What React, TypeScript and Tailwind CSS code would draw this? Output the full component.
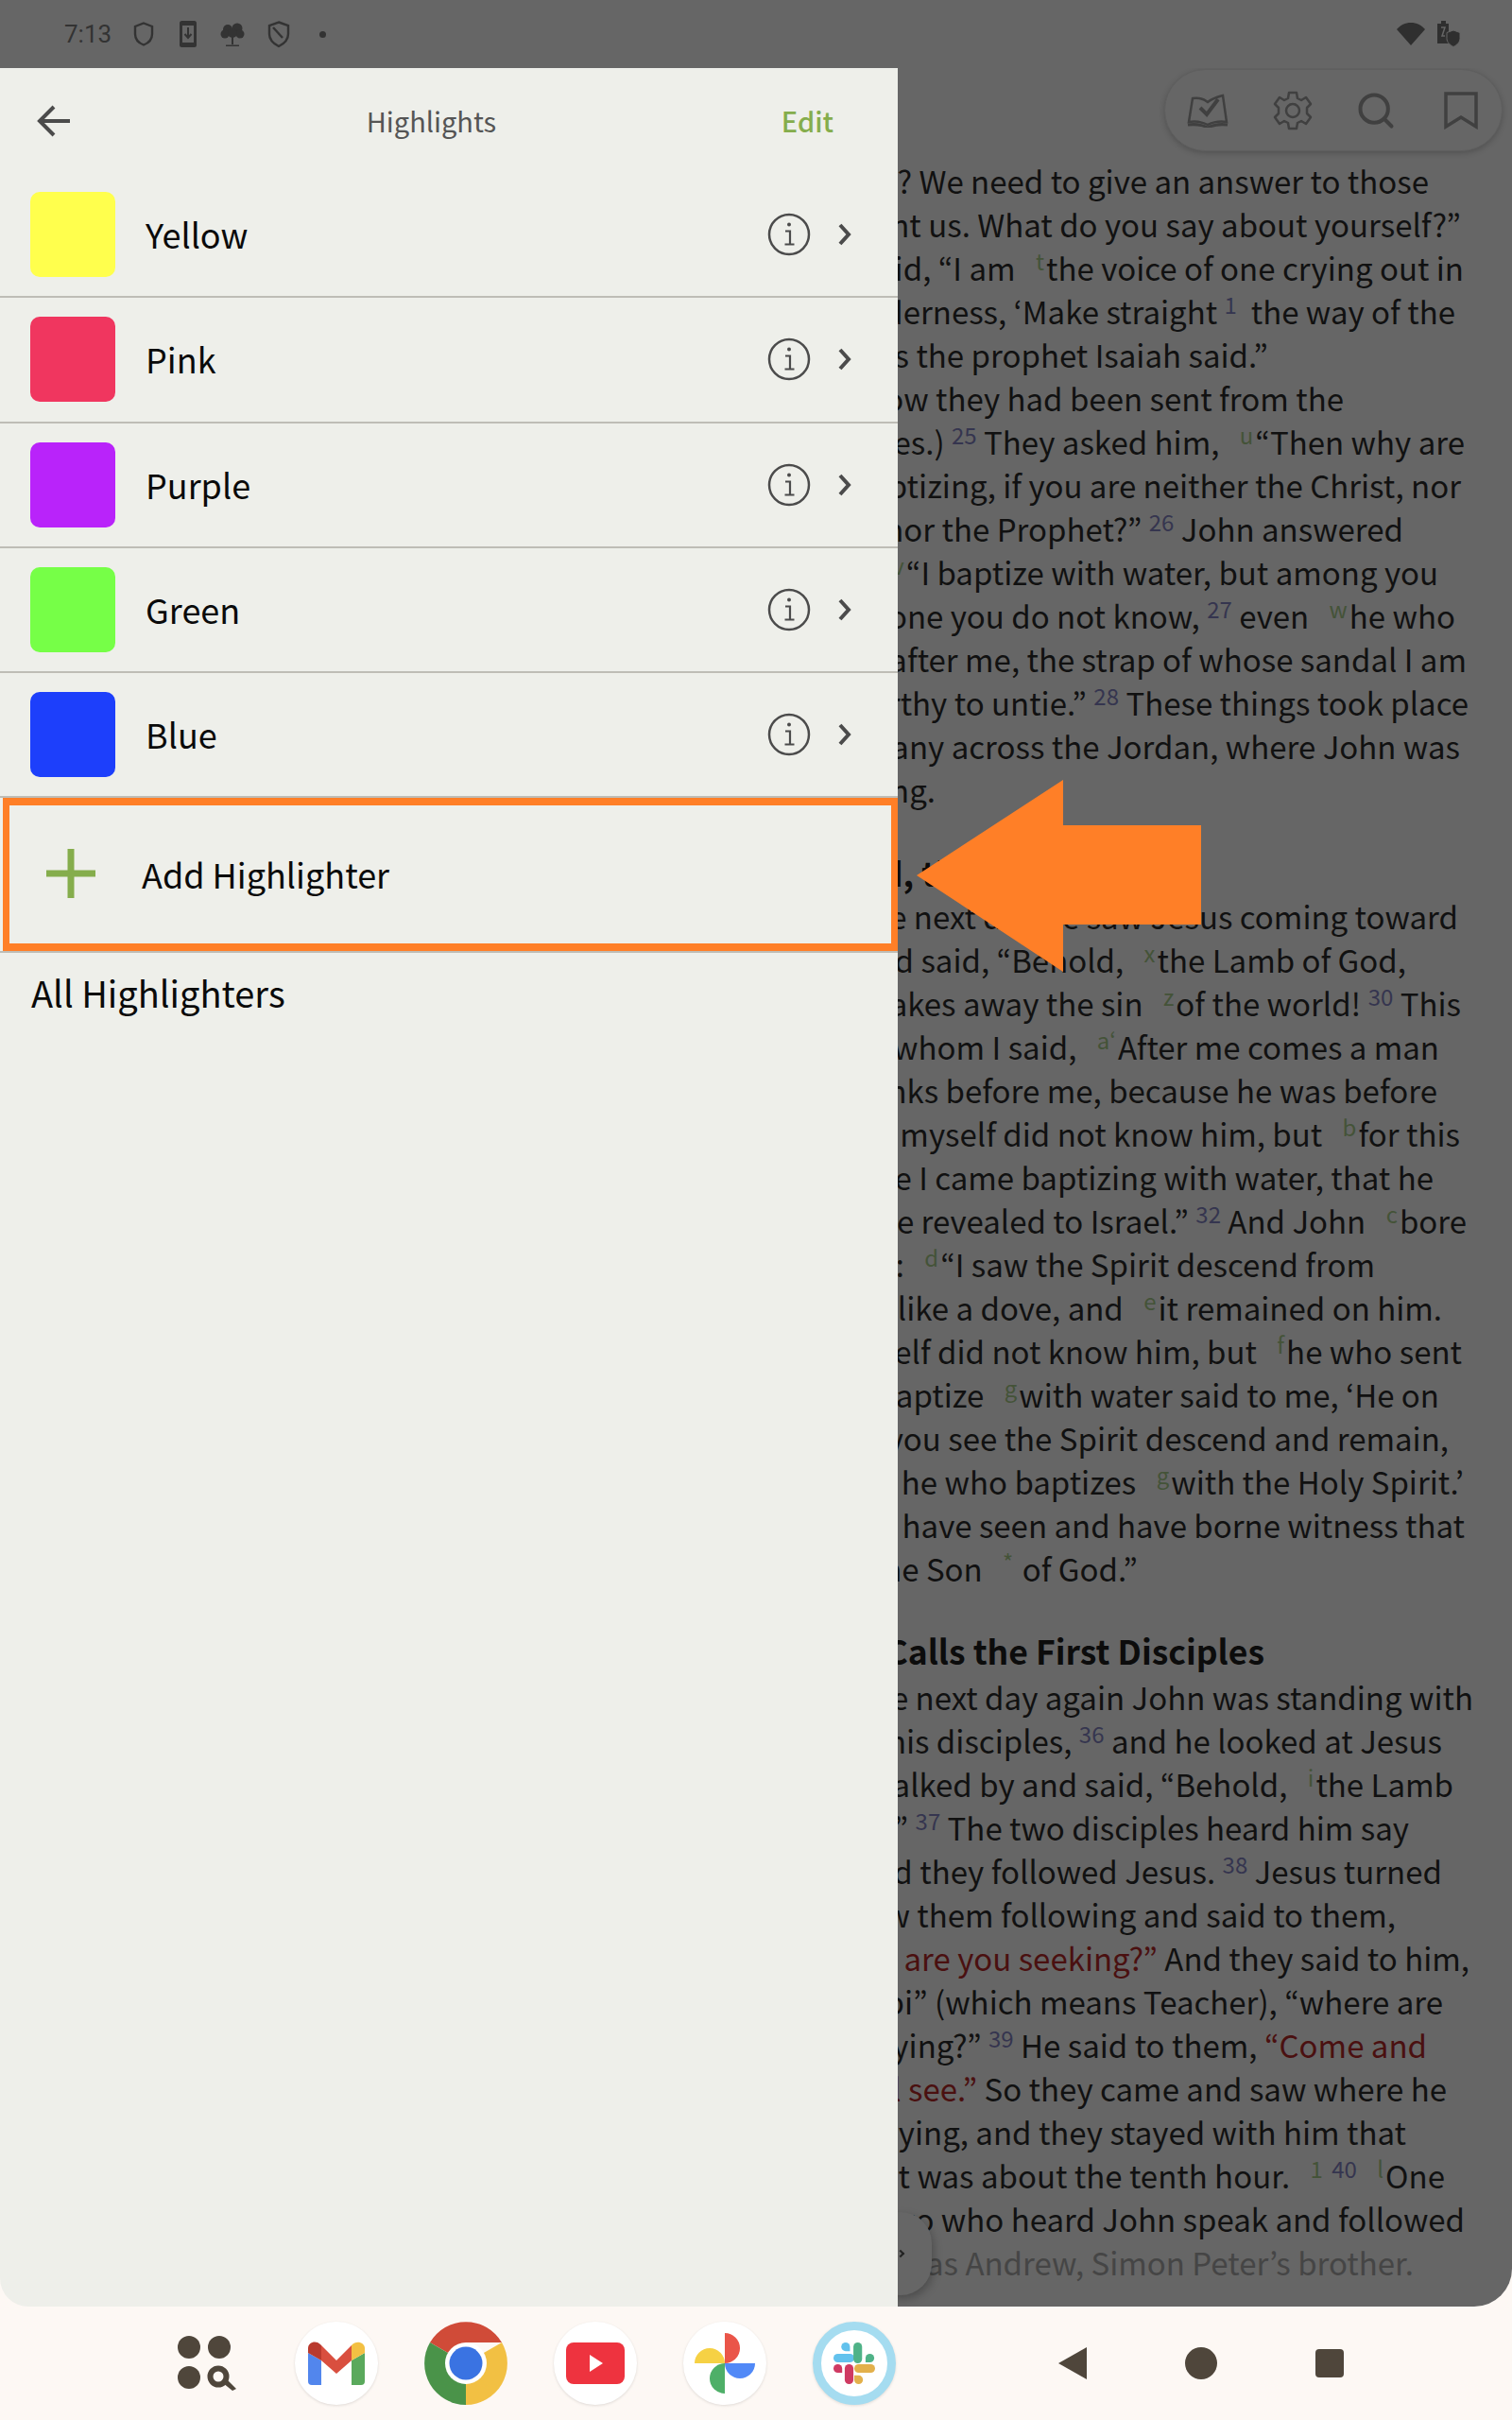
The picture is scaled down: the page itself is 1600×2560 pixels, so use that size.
import { Search } from "lucide-react";

type Seg = string | { v: string } | { f: string } | { r: string };

interface Line {
  end: number; // x where the line's last glyph stops
  segs: Seg[];
  grey?: boolean;
}

const colors = [
  { name: "Yellow", hex: "bg-[#ffff4d]" },
  { name: "Pink", hex: "bg-[#f0365f]" },
  { name: "Purple", hex: "bg-[#b923fa]" },
  { name: "Green", hex: "bg-[#76ff47]" },
  { name: "Blue", hex: "bg-[#1d3ffb]" },
];

const firstLines: Line[] = [
  { end: 1512, segs: ["? We need to give an answer to those"] },
  { end: 1546, segs: ["sent us. What do you say about yourself?”"] },
  { end: 1549, segs: ["He said, “I am ", { f: "t" }, "the voice of one crying out in"] },
  { end: 1540, segs: ["the wilderness, ‘Make straight ", { v: "1" }, "  the way of the"] },
  { end: 1342, segs: ["Lord,’ as the prophet Isaiah said.”"] },
  { end: 1422, segs: ["(Now they had been sent from the"] },
  { end: 1550, segs: ["Pharisees.) ", { v: "25" }, " They asked him, ", { f: "u" }, "“Then why are"] },
  { end: 1546, segs: ["you baptizing, if you are neither the Christ, nor"] },
  { end: 1485, segs: ["Elijah, nor the Prophet?” ", { v: "26" }, " John answered"] },
  { end: 1522, segs: ["them, ", { f: "v" }, "“I baptize with water, but among you"] },
  { end: 1540, segs: ["stands one you do not know, ", { v: "27" }, " even ", { f: "w" }, "he who"] },
  { end: 1552, segs: ["comes after me, the strap of whose sandal I am"] },
  { end: 1554, segs: ["not worthy to untie.” ", { v: "28" }, " These things took place"] },
  { end: 1545, segs: ["in Bethany across the Jordan, where John was"] },
  { end: 990, segs: ["baptizing."] },
];

const secondLines: Line[] = [
  { end: 1543, segs: ["The next day he saw Jesus coming toward"] },
  { end: 1488, segs: ["him, and said, “Behold, ", { f: "x" }, "the Lamb of God,"] },
  { end: 1546, segs: ["who takes away the sin ", { f: "z" }, "of the world! ", { v: "30" }, " This"] },
  { end: 1523, segs: ["is he of whom I said, ", { f: "a‘" }, "After me comes a man"] },
  { end: 1521, segs: ["who ranks before me, because he was before"] },
  { end: 1545, segs: ["myself did not know him, but ", { f: "b" }, "for this"] },
  { end: 1517, segs: ["purpose I came baptizing with water, that he"] },
  { end: 1552, segs: ["might be revealed to Israel.” ", { v: "32" }, " And John ", { f: "c" }, "bore"] },
  { end: 1455, segs: ["witness: ", { f: "d" }, "“I saw the Spirit descend from"] },
  { end: 1526, segs: ["like a dove, and ", { f: "e" }, "it remained on him."] },
  { end: 1547, segs: ["I myself did not know him, but ", { f: "f" }, "he who sent"] },
  { end: 1523, segs: ["me to baptize ", { f: "g" }, "with water said to me, ‘He on"] },
  { end: 1533, segs: ["whom you see the Spirit descend and remain,"] },
  { end: 1549, segs: ["this is he who baptizes ", { f: "g" }, "with the Holy Spirit.’"] },
  { end: 1550, segs: ["have seen and have borne witness that"] },
  { end: 1204, segs: ["this is the Son ", { f: "*" }, " of God.”"] },
];

const thirdLines: Line[] = [
  { end: 1559, segs: ["The next day again John was standing with"] },
  { end: 1526, segs: ["two of his disciples, ", { v: "36" }, " and he looked at Jesus"] },
  { end: 1538, segs: ["as he walked by and said, “Behold, ", { f: "i" }, "the Lamb"] },
  { end: 1491, segs: ["of God!” ", { v: "37" }, " The two disciples heard him say"] },
  { end: 1526, segs: ["this, and they followed Jesus. ", { v: "38" }, " Jesus turned"] },
  { end: 1477, segs: ["and saw them following and said to them,"] },
  { end: 1555, segs: [{ r: "“What are you seeking?”" }, " And they said to him,"] },
  { end: 1527, segs: ["“Rabbi” (which means Teacher), “where are"] },
  { end: 1510, segs: ["you staying?” ", { v: "39" }, " He said to them, ", { r: "“Come and" }] },
  { end: 1531, segs: [{ r: "you will see.”" }, " So they came and saw where he"] },
  { end: 1488, segs: ["was staying, and they stayed with him that"] },
  { end: 1529, segs: ["day, for it was about the tenth hour. ", { f: "1" }, " ", { v: "40" }, " ", { f: "l" }, "One"] },
  { end: 1550, segs: ["of the two who heard John speak and followed"] },
  { end: 1496, segs: ["him was Andrew, Simon Peter’s brother."], grey: true },
];

function ReadingLine({ line }: { line: Line }) {
  return (
    <div
      className={`flex h-[46px] justify-end whitespace-pre text-[33px] leading-[46px] ${line.grey ? "text-[#454545]" : "text-[#111111]"}`}
      style={{ marginRight: 1600 - line.end }}
    >
      <span className="shrink-0">
        {line.segs.map((s, i) => {
          if (typeof s === "string") return <span key={i}>{s}</span>;
          if ("v" in s)
            return (
              <span key={i} className="relative -top-[11px] text-[24px] leading-none text-[#35354f]">
                {s.v}
              </span>
            );
          if ("f" in s)
            return (
              <span key={i} className="relative -top-[11px] ml-[14px] mr-[2px] text-[24px] leading-none text-[#445338]">
                {s.f}
              </span>
            );
          return (
            <span key={i} className="text-[#4a1010]">
              {s.r}
            </span>
          );
        })}
      </span>
    </div>
  );
}

function Heading({ text, end, className }: { text: string; end: number; className: string }) {
  return (
    <div
      className={`flex justify-end whitespace-pre text-[35.500px] font-bold leading-[46px] text-[#0c0c0c] ${className}`}
      style={{ marginRight: 1600 - end }}
    >
      <span className="shrink-0">{text}</span>
    </div>
  );
}

function StatusBar() {
  return (
    <div className="flex h-[72px] shrink-0 items-center justify-between bg-[#666666] pl-[68px] pr-[54px] text-[#2f2f2f]">
      <div className="flex items-center">
        <span className="text-[26px] font-[Roboto,sans-serif] leading-none text-[#333333]">7:13</span>
        <svg className="ml-[22px]" width="24" height="28" viewBox="0 0 24 28" fill="none" stroke="#333" strokeWidth="2.4">
          <path d="M12 2.5 21 6v8c0 5.5-3.7 9.5-9 11.5C6.700 23.500 3 19.500 3 14V6z" />
        </svg>
        <svg className="ml-[25px]" width="20" height="30" viewBox="0 0 20 30">
          <rect x="1" y="1" width="18" height="28" rx="2.500" fill="#333" />
          <rect x="4" y="6" width="12" height="18" fill="#666" />
          <path d="M10 8v10M6.500 15l3.500 4 3.500-4" stroke="#333" strokeWidth="2" fill="none" />
        </svg>
        <svg className="ml-[23px]" width="28" height="28" viewBox="0 0 28 28" fill="#333">
          <circle cx="9" cy="9" r="5" />
          <circle cx="19" cy="8" r="5.500" />
          <circle cx="6" cy="14" r="4.500" />
          <circle cx="22" cy="14" r="4.500" />
          <circle cx="14" cy="13" r="5" />
          <path d="M13 14h2v11h-2zM7 25.500h14v1.500H7z" />
        </svg>
        <svg className="ml-[23px]" width="24" height="30" viewBox="0 0 24 30" fill="none" stroke="#333" strokeWidth="2.400">
          <path d="M12 2.500 22 6v9c0 6-4 10-10 13C6 25 2 21 2 15V6z" />
          <path d="M6 8l10 11" />
        </svg>
        <span className="ml-[31px] h-[7px] w-[7px] rounded-full bg-[#333333]" />
      </div>
      <div className="flex items-center gap-[12px]">
        <svg width="30" height="26" viewBox="0 0 30 26" fill="#2f2f2f">
          <path d="M15 25 0 8C4 3.500 9 1 15 1s11 2.500 15 7z" />
        </svg>
        <svg width="26" height="30" viewBox="0 0 26 30" fill="#2f2f2f">
          <path d="M5 1h5v3h3v21H1V4h4z" />
          <path d="M5 8h4l-3 9h3" stroke="#666" strokeWidth="1.500" fill="none" />
          <path d="M18 11l7 2.500v6c0 4-3 7-7 9-4-2-7-5-7-9v-6z" stroke="#666" strokeWidth="1" />
        </svg>
      </div>
    </div>
  );
}

function InfoIcon() {
  return (
    <svg width="46" height="46" viewBox="0 0 46 46" fill="none" stroke="#4b4b4b">
      <circle cx="23" cy="23" r="21" strokeWidth="2.500" />
      <path d="M19 19.500h5v14M18.500 33.500h10" strokeWidth="2.200" />
      <circle cx="23" cy="12.500" r="2" fill="#4b4b4b" stroke="none" />
    </svg>
  );
}

function ColorRow({ name, hex }: { name: string; hex: string }) {
  return (
    <div className="flex h-[132.300px] items-center border-b-2 border-[#bebdb6] pl-[32px] pr-[46px]">
      <div className={`h-[90px] w-[90px] rounded-[10px] ${hex}`} />
      <span className="mb-[2px] ml-[32px] flex-1 text-[36px] leading-none text-[#0a0a0a]">{name}</span>
      <InfoIcon />
      <svg className="ml-[26px]" width="20" height="30" viewBox="0 0 20 30" fill="none" stroke="#4b4b4b" strokeWidth="4">
        <path d="M5 5l9 10-9 10" />
      </svg>
    </div>
  );
}

function HighlightsPanel() {
  return (
    <div className="flex w-[950px] shrink-0 flex-col rounded-bl-[30px] bg-[#eeefea] text-[#4b4b4b]">
      <div className="flex h-[111px] shrink-0 items-center pl-[38px] pr-[68px]">
        <svg width="38" height="36" viewBox="0 0 38 36" fill="none" stroke="#4b4b4b" strokeWidth="4">
          <path d="M36 18H4M19 3 4 18l15 15" />
        </svg>
        <span className="ml-[10px] flex-1 text-center text-[29px] leading-none text-[#555555]">Highlights</span>
        <span className="text-[29px] font-medium leading-none text-[#85ad4c]">Edit</span>
      </div>
      <div>
        {colors.map((c) => (
          <ColorRow key={c.name} name={c.name} hex={c.hex} />
        ))}
      </div>
      <div className="ml-[3px] flex h-[162px] items-center border-x-[7px] border-y-[8px] border-[#ff7f27] pl-[39px]">
        <svg className="-mt-[2px]" width="52" height="52" viewBox="0 0 52 52" fill="#85ad4c">
          <path d="M22.500 0h7v52h-7zM0 22.500h52v7H0z" />
        </svg>
        <span className="mb-[3px] ml-[49px] text-[36px] leading-none text-[#0a0a0a]">Add Highlighter</span>
      </div>
      <div className="h-[2px] bg-[#bebdb6]" />
      <div className="mt-[19px] pl-[33px] text-[38px] leading-[46px] text-[#0a0a0a]">All Highlighters</div>
    </div>
  );
}

function ToolPill() {
  return (
    <div className="absolute left-[282px] top-[1px] flex h-[87px] w-[358px] items-center rounded-full border border-[#5f5f5f] bg-[#666666] pl-[22px] shadow-[0_2px_6px_rgba(0,0,0,0.2)]">
      <svg width="46" height="36" viewBox="0 0 46 36" fill="none" stroke="#404040" strokeWidth="2.500">
        <path d="M7 5c6-1 11 0 16 4 5-4 9-5 16-7l4 28c-7-1-14 0-20 3-6-3-13-4-20-3z" />
        <path d="M15 15l7 7L34 6" strokeWidth="4" />
        <path d="M2 33c8-1 15 0 21 3 6-3 13-4 21-3" strokeWidth="3" />
      </svg>
      {/* gear: toothed ring with a hollow hub */}
      <svg className="ml-[46px]" width="42" height="42" viewBox="0 0 42 42" fill="none" stroke="#404040" strokeWidth="2.500">
        <path d="M17 2h8l1 6 4 2 5-3 5 7-4 4v6l4 4-5 7-5-3-4 2-1 6h-8l-1-6-4-2-5 3-5-7 4-4v-6l-4-4 5-7 5 3 4-2z" strokeLinejoin="round" />
        <circle cx="21" cy="21" r="7" />
      </svg>
      <Search className="ml-[45px]" size={44} strokeWidth={2.2} color="#404040" />
      <svg className="ml-[50px]" width="36" height="40" viewBox="0 0 36 40" fill="none" stroke="#404040" strokeWidth="3.500">
        <path d="M2 2h32v35L18 27 2 37z" />
      </svg>
    </div>
  );
}

function ReadingPane() {
  return (
    <div className="relative min-w-0 flex-1 overflow-hidden rounded-br-[40px] bg-[#666666] pt-[96px]">
      {firstLines.map((l, i) => (
        <ReadingLine key={i} line={l} />
      ))}
      <Heading text="Behold, the Lamb of God" end={1262} className="mt-[42px]" />
      {secondLines.map((l, i) => (
        <ReadingLine key={i} line={l} />
      ))}
      <Heading text="Jesus Calls the First Disciples" end={1338} className="mt-[41px] h-[49px]" />
      {thirdLines.map((l, i) => (
        <ReadingLine key={i} line={l} />
      ))}
      <ToolPill />
      <div className="absolute -left-[30px] top-[2268px] flex h-[88px] w-[66px] items-center justify-end rounded-full bg-[#666666] pr-[30px] shadow-[2px_4px_10px_rgba(0,0,0,0.25)]">
        <span className="h-[6px] w-[6px] rotate-45 border-r-2 border-t-2 border-[#222222]" />
      </div>
    </div>
  );
}

function DockIcon({ children, ring }: { children: React.ReactNode; ring?: boolean }) {
  return (
    <div
      className={`flex h-[88px] w-[88px] items-center justify-center rounded-full bg-white shadow-[0_1px_3px_rgba(0,0,0,0.12)] ${ring ? "border-[9px] border-[#a5dcf0]" : ""}`}
    >
      {children}
    </div>
  );
}

function Dock() {
  return (
    <div className="flex h-[120px] shrink-0 items-center pl-[188px]">
      <svg width="66" height="58" viewBox="0 0 66 58" fill="#4f463b">
        <circle cx="12" cy="12" r="12" />
        <circle cx="44" cy="12" r="12" />
        <circle cx="12" cy="44" r="12" />
        <circle cx="43" cy="43" r="8.500" fill="none" stroke="#4f463b" strokeWidth="6" />
        <path d="M48 50l5-3 9 9-4 2z" />
      </svg>
      <div className="ml-[58px] flex gap-[49px]">
        <DockIcon>
          <svg width="60" height="46" viewBox="0 0 60 46">
            <path d="M0 12v30a4 4 0 0 0 4 4h10V20z" fill="#5286ed" />
            <path d="M46 20v26h10a4 4 0 0 0 4-4V12z" fill="#5aa95c" />
            <path d="M14 20 0 12V7c0-6 8-9 13-4l1 1z" fill="#b93a2e" />
            <path d="M14 4 30 20 46 4v16L30 34 14 20z" fill="#d94f3f" />
            <path d="M46 4c5-6 14-3 14 3v5L46 20z" fill="#f3c043" />
          </svg>
        </DockIcon>
        <div className="relative h-[88px] w-[88px] rounded-full">
          <svg width="88" height="88" viewBox="0 0 88 88">
            <path d="M44 44 6 22A44 44 0 0 1 82 22H44z" fill="#d04b38" />
            <path d="M44 44 44 88A44 44 0 0 1 6 22z" fill="#4a9349" />
            <path d="M44 44 82 22A44 44 0 0 1 44 88z" fill="#f2c043" />
            <circle cx="44" cy="44" r="22" fill="#fff" />
            <circle cx="44" cy="44" r="17.500" fill="#3a73e2" />
          </svg>
        </div>
        <DockIcon>
          <svg width="62" height="44" viewBox="0 0 62 44">
            <rect width="62" height="44" rx="8" fill="#ee333f" />
            <path d="M25 13l14 9-14 9z" fill="#fff" />
          </svg>
        </DockIcon>
        <DockIcon>
          <svg width="64" height="64" viewBox="0 0 64 64">
            <path d="M32 0a16 16 0 0 1 0 32z" fill="#ea5549" />
            <path d="M64 32a16 16 0 0 1-32 0z" fill="#5189f7" />
            <path d="M32 64a16 16 0 0 1 0-32z" fill="#4eaf68" />
            <path d="M0 32a16 16 0 0 1 32 0z" fill="#f6d144" />
          </svg>
        </DockIcon>
        <DockIcon ring>
          <svg width="44" height="44" viewBox="0 0 48 48">
            <g strokeWidth="0">
              <path d="M14 0a5 5 0 0 1 5 5v5h-5a5 5 0 0 1 0-10z" fill="#63c2ed" />
              <path d="M0 18a5 5 0 0 1 5-5h14a5 5 0 0 1 0 10H5a5 5 0 0 1-5-5z" fill="#63c2ed" />
              <rect x="23" y="0" width="10" height="24" rx="5" fill="#4fb287" />
              <path d="M37 18a5 5 0 0 1 10 0 5 5 0 0 1-5 5h-5z" fill="#4fb287" />
              <rect x="24" y="25" width="24" height="10" rx="5" fill="#e3b04b" />
              <path d="M24 38h5a5 5 0 0 1 0 10 5 5 0 0 1-5-5z" fill="#e3b04b" />
              <rect x="13" y="25" width="10" height="23" rx="5" fill="#cf3a62" />
              <path d="M0 30a5 5 0 0 1 10 0v5H5a5 5 0 0 1-5-5z" fill="#cf3a62" />
            </g>
          </svg>
        </DockIcon>
      </div>
      <div className="ml-[170px] flex items-center gap-[104px]">
        <svg width="32" height="34" viewBox="0 0 32 34" fill="#4f463b">
          <path d="M32 0v34L2 17z" />
        </svg>
        <span className="h-[34px] w-[34px] rounded-full bg-[#4f463b]" />
        <span className="h-[30px] w-[30px] rounded-[4px] bg-[#4f463b]" />
      </div>
    </div>
  );
}

export default function App() {
  return (
    <div
      className="relative flex h-[2560px] w-[1600px] flex-col overflow-hidden bg-[#fdf8f4]"
      style={{ fontFamily: '"Noto Sans CJK JP", "Noto Sans", sans-serif' }}
    >
      <StatusBar />
      <div className="flex min-h-0 flex-1">
        <HighlightsPanel />
        <ReadingPane />
      </div>
      <Dock />
      {/* callout arrow drawn over the screenshot */}
      <svg className="absolute left-[960px] top-[815px]" width="320" height="225" viewBox="0 0 320 225" fill="#ff7f27">
        <path d="M10 111 165 10v48h146v105H165v50z" />
      </svg>
    </div>
  );
}
